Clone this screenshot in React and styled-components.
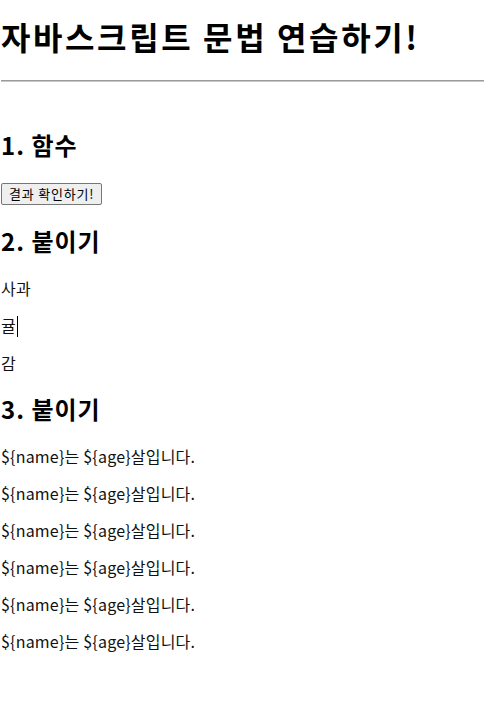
import React from "react";
import styled, { createGlobalStyle } from "styled-components";

const GlobalStyle = createGlobalStyle`
  html, body {
    margin: 0;
    padding: 0;
    background: #ffffff;
  }
  body {
    padding: 0 1px;
    font-family: "Noto Sans CJK KR", "Noto Sans", sans-serif;
    color: #000;
  }
`;

const Page = styled.main`
  display: flex;
  flex-direction: column;
  padding-bottom: 40px;
`;

const Title = styled.h1`
  margin: 16px 0 0;
  font-size: 32px;
  font-weight: 700;
  line-height: 40px;
  letter-spacing: 2.6px;
`;

const Rule = styled.hr`
  margin: 24px 0 0;
  border: none;
  border-top: 1px solid #9a9a9a;
  border-bottom: 1px solid #c8c8c8;
  height: 0;
`;

const Heading = styled.h2`
  margin: ${(p) => (p.$first ? "47px" : p.$tight ? "19px" : "20px")} 0 0;
  font-size: 24px;
  font-weight: 700;
  line-height: 32px;
  letter-spacing: 1px;
`;

const Button = styled.button`
  align-self: flex-start;
  margin-top: 22px;
  height: 22px;
  padding: 0 7px;
  font-family: "Noto Sans CJK KR", "Noto Sans", sans-serif;
  font-size: 13px;
  line-height: 18px;
  letter-spacing: 0.8px;
  color: #000;
  background: #efefef;
  border: 1px solid #767676;
  border-radius: 2px;
`;

const Line = styled.p`
  margin: ${(p) => (p.$first ? "21px" : "16px")} 0 0;
  font-size: 16px;
  line-height: 21px;
  font-weight: 400;
  letter-spacing: 0.2px;
  color: #111;
`;

const Caret = styled.span`
  display: inline-block;
  width: 1px;
  height: 21px;
  margin-left: 1px;
  vertical-align: -5px;
  background: #000;
`;

const fruits = ["사과", "귤", "감"];
const sentences = Array.from({ length: 6 }, () => "${name}는 ${age}살입니다.");

export default function App() {
  return (
    <>
      <GlobalStyle />
      <Page>
        <Title>자바스크립트 문법 연습하기!</Title>
        <Rule />
        <Heading $first>1. 함수</Heading>
        <Button type="button">결과 확인하기!</Button>
        <Heading>2. 붙이기</Heading>
        {fruits.map((f, i) => (
          <Line key={f} $first={i === 0}>
            {f}
            {f === "귤" && <Caret />}
          </Line>
        ))}
        <Heading $tight>3. 붙이기</Heading>
        {sentences.map((s, i) => (
          <Line key={i} $first={i === 0}>
            {s}
          </Line>
        ))}
      </Page>
    </>
  );
}
